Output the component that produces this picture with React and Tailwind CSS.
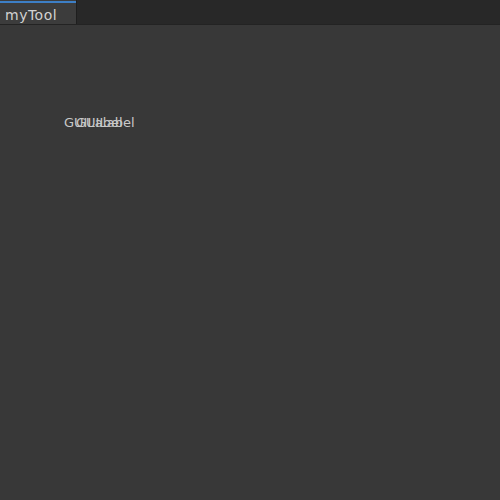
export default function App() {
  return (
    <div className="flex h-[500px] w-[500px] flex-col bg-[#383838] font-['DejaVu_Sans',Verdana,sans-serif]">
      {/* tab strip */}
      <div className="flex h-[25px] border-b border-[#232323] bg-[#282828]">
        <div className="flex w-[77px] flex-col border-r border-[#1e1e1e] bg-[#3c3c3c]">
          <div className="mt-px h-[2px] bg-[#3d7fc6]" />
          <div className="px-[5px] pt-[3px] text-[14px] leading-[18px] tracking-[0.5px] text-[#d2d2d2]">myTool</div>
        </div>
      </div>

      {/* window body: two labels drawn on top of each other */}
      <div className="relative flex-1">
        <span className="absolute left-[64px] top-[90px] whitespace-nowrap text-[13px] leading-[16px] text-[#c8c8c8]">GUILabel</span>
        <span className="absolute left-[76px] top-[90px] whitespace-nowrap text-[13px] leading-[16px] text-[#c8c8c8]">GUILabel</span>
      </div>
    </div>
  );
}
